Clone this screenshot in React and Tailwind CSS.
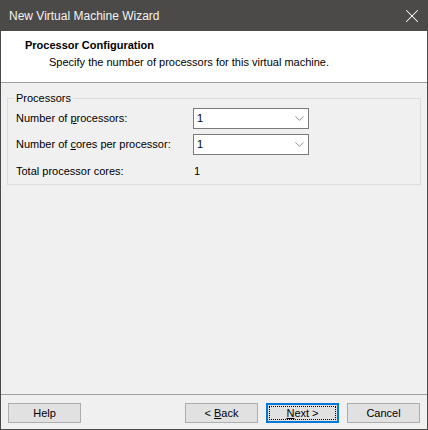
import { ChevronDown, X } from "lucide-react";

const font = { fontFamily: '"Liberation Sans", Arial, sans-serif' };

const Select = ({ value }) => (
  <div className="w-[116px] h-[21px] shrink-0 border border-[#7a7a7a] bg-white flex items-center justify-between pl-[3px] pr-[1px]">
    <span className="text-[11px] text-black leading-none">{value}</span>
    <ChevronDown size={15} strokeWidth={1.1} className="text-[#606060]" />
  </div>
);

const Button = ({ children, focused }) => (
  <button
    className={`w-[73px] h-[20px] bg-[#e1e1e1] text-[11px] text-black leading-none flex items-center justify-center ${
      focused ? "border-2 border-[#0078d7] p-[1px]" : "border border-[#adadad]"
    }`}
  >
    {focused ? (
      <span className="w-full h-full border border-dotted border-black flex items-center justify-center">
        <span>{children}</span>
      </span>
    ) : (
      <span>{children}</span>
    )}
  </button>
);

export default function App() {
  return (
    <div
      className="w-[428px] h-[430px] flex flex-col bg-[#f0f0f0] border-x border-b border-[#4b4a48]"
      style={font}
    >
      <div className="h-[31px] shrink-0 bg-[#4b4a48] flex items-center justify-between pl-[9px] pr-[5px] -mx-px">
        <span className="text-[12px] text-[#f3f3f3]">New Virtual Machine Wizard</span>
        <X size={22} strokeWidth={1.1} className="text-white" />
      </div>

      <div className="h-[52px] shrink-0 bg-white border-b border-[#a0a0a0] pt-[7px]">
        <div className="pl-[24px] text-[11px] font-bold text-black leading-[15px]">
          Processor Configuration
        </div>
        <div className="pl-[48px] text-[11px] text-black leading-[15px] mt-[2px]">
          Specify the number of processors for this virtual machine.
        </div>
      </div>

      <div className="flex-1 px-[6px] pt-[8px]">
        <fieldset className="border border-[#dcdcdc] h-[94px]">
          <legend className="ml-[6px] px-[2px] text-[11px] text-black leading-[15px]">
            Processors
          </legend>
          <div className="pl-[8px] flex flex-col text-[11px] text-black whitespace-nowrap">
            <div className="flex items-center mt-[2px]">
              <span className="w-[177px] shrink-0">
                Number of <span className="underline">p</span>rocessors:
              </span>
              <Select value="1" />
            </div>
            <div className="flex items-center mt-[5px]">
              <span className="w-[177px] shrink-0">
                Number of <span className="underline">c</span>ores per processor:
              </span>
              <Select value="1" />
            </div>
            <div className="flex items-center mt-[8px]">
              <span className="w-[178px] shrink-0">Total processor cores:</span>
              <span>1</span>
            </div>
          </div>
        </fieldset>
      </div>

      <div className="shrink-0 border-t border-[#a0a0a0] h-[35px] flex items-start pt-[8px] px-[7px]">
        <Button>Help</Button>
        <div className="flex-1" />
        <div className="flex gap-[8px]">
          <Button>
            &lt; <span className="underline">B</span>ack
          </Button>
          <Button focused>
            <span className="underline">N</span>ext &gt;
          </Button>
          <Button>Cancel</Button>
        </div>
      </div>
    </div>
  );
}
